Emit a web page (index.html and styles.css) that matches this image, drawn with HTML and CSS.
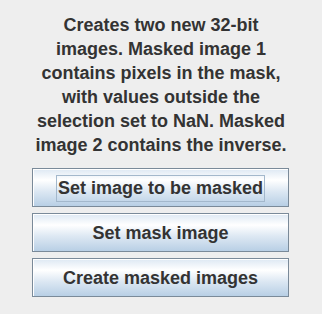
FILE: index.html
```html
<!DOCTYPE html>
<html>
    <head>
        <title>Masked images</title>
        <link rel="stylesheet" href="styles.css">
    </head>
    <body>
        <div class='panel'>
            <p class='info'>Creates two new 32-bit<br>images. Masked image 1<br>contains pixels in the mask,<br>with values outside the<br>selection set to NaN. Masked<br>image 2 contains the inverse.</p>
            <div class='buttons'>
                <button class='button' id='imagebtn'><span class='focus'>Set image to be masked</span></button>
                <button class='button' id='maskbtn'><span>Set mask image</span></button>
                <button class='button' id='createbtn'><span>Create masked images</span></button>
            </div>
        </div>
    </body>
</html>
```

FILE: styles.css
```css
body{
    margin: 0;
    background-color: #eeeeee;
    font-family: "Liberation Sans", Arial, sans-serif;
    color: #333333;
}
.panel{
    width: 322px;
    height: 314px;
    padding-top: 13px;
    box-sizing: border-box;
}
.info{
    margin: 0;
    text-align: center;
    font-weight: bold;
    font-size: 18px;
    line-height: 24px;
}
.buttons{
    display: flex;
    flex-direction: column;
    gap: 6px;
    width: 257px;
    margin: 11px 0 0 32px;
}
.button{
    height: 39px;
    margin: 0;
    padding: 1px 0 0 0;
    border: 1px solid #7a8a99;
    box-shadow: inset 1px 1px 0 #ffffff;
    background: linear-gradient(to bottom, #dde8f3 0%, #ffffff 30%, #dde8f3 60%, #b8cfe5 100%);
    font-family: "Liberation Sans", Arial, sans-serif;
    font-weight: bold;
    font-size: 18px;
    color: #333333;
    display: flex;
    justify-content: center;
    align-items: center;
}
.button span{
    padding: 2px 1px;
    line-height: 21px;
    border: 1px solid transparent;
}
.button .focus{
    border-color: #a3b8cc;
}
```
